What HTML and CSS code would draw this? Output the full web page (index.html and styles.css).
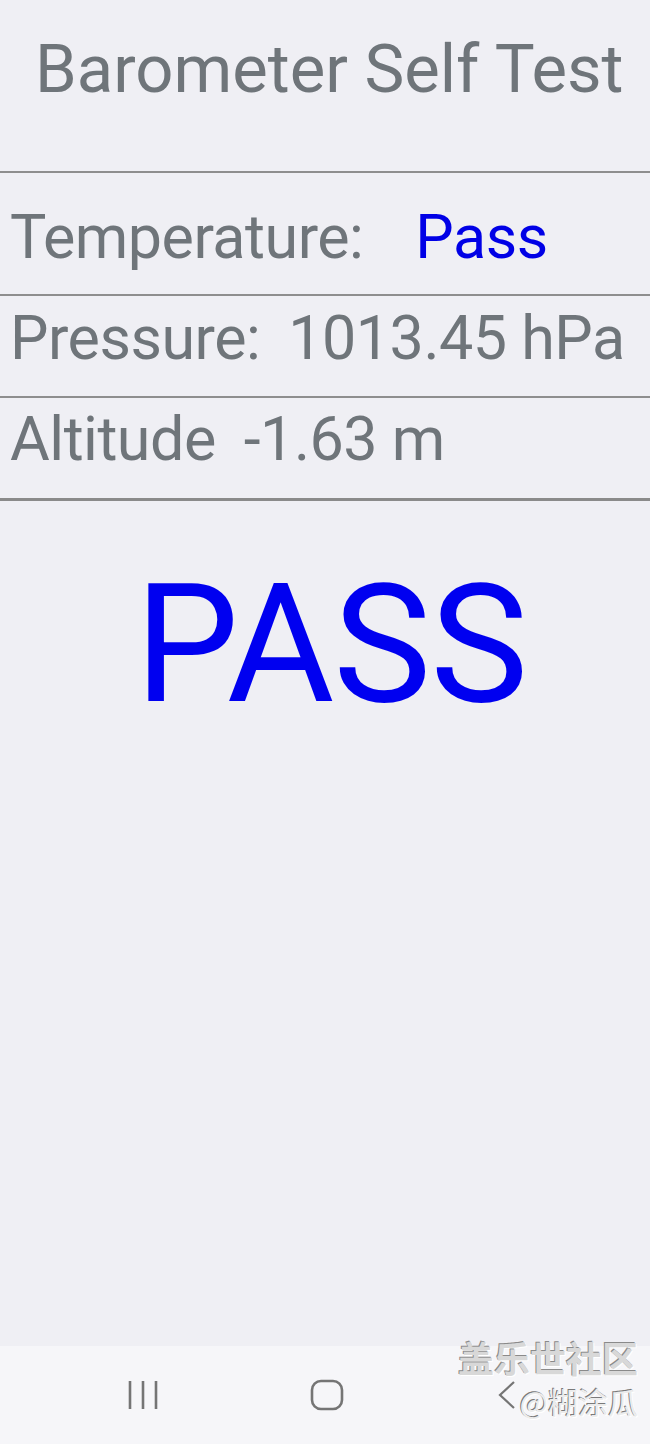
FILE: index.html
```html
<!DOCTYPE html>
<html lang="en">
<head>
    <meta charset="UTF-8">
    <meta name="viewport" content="width=device-width,initial-scale=1.0">
    <title>Barometer Self Test</title>
    <link rel="stylesheet" href="styles.css">
</head>
<body>
<div class="screen">
    <div class="content">
        <div class="title">Barometer Self Test</div>
        <div class="row row-first">
            <span class="label">Temperature:</span>
            <span class="value pass-text temp-value">Pass</span>
        </div>
        <div class="row">
            <span class="label">Pressure:</span>
            <span class="value">1013.45 hPa</span>
        </div>
        <div class="row row-last">
            <span class="label">Altitude</span>
            <span class="value">-1.63 m</span>
        </div>
        <div class="result">PASS</div>
    </div>
    <div class="navbar">
        <svg class="nav-icon" width="34" height="30" viewBox="0 0 34 30">
            <path d="M4 1v28M17 1v28M30 1v28" stroke="#757575" stroke-width="2.6" fill="none"/>
        </svg>
        <svg class="nav-icon" width="34" height="32" viewBox="0 0 34 32">
            <rect x="2" y="2" width="30" height="28" rx="9" stroke="#757575" stroke-width="2.6" fill="none"/>
        </svg>
        <svg class="nav-icon nav-back" width="34" height="30" viewBox="0 0 34 30">
            <path d="M26 2L12 15l14 13" stroke="#757575" stroke-width="2.2" fill="none"/>
        </svg>
        <div class="watermark">
            <div class="wm-big">盖乐世社区</div>
            <div class="wm-small">@糊涂瓜</div>
        </div>
    </div>
</div>
</body>
</html>
```

FILE: styles.css
```css
html, body {
    margin: 0;
    padding: 0;
}

body {
    background: #efeff4;
    font-family: Roboto, "Noto Sans", sans-serif;
    color: #6f757a;
}

.screen {
    width: 650px;
    height: 1444px;
    display: flex;
    flex-direction: column;
    overflow: hidden;
}

.content {
    flex: 1;
}

.title {
    font-size: 67px;
    line-height: 67px;
    padding: 36px 0 68px 35px;
    border-bottom: 2px solid #8e8e8e;
    white-space: nowrap;
}

.row {
    display: flex;
    align-items: baseline;
    font-size: 61px;
    line-height: 61px;
    letter-spacing: -0.5px;
    padding: 12px 0 27px 10px;
    border-bottom: 2px solid #8e8e8e;
    white-space: nowrap;
}

.row-first {
    padding-top: 34px;
    padding-bottom: 26px;
}

.row-last {
    padding-top: 11px;
    padding-bottom: 28px;
    border-bottom: 3px solid #8a8a8a;
}

.value {
    margin-left: 28px;
}

.temp-value {
    margin-left: 52px;
}

.pass-text {
    color: #0000e6;
}

.result {
    font-size: 165px;
    line-height: 165px;
    letter-spacing: -1px;
    color: #0000f0;
    text-align: center;
    padding: 61px 0 0 12px;
}

.navbar {
    position: relative;
    height: 98px;
    background: #f6f6f9;
    display: flex;
    align-items: center;
    gap: 150px;
    padding-left: 126px;
}

.nav-icon {
    display: block;
}

.nav-back {
    margin-left: -6px;
}

.watermark {
    position: absolute;
    right: 12px;
    top: -9px;
    font-family: "Noto Sans CJK SC", sans-serif;
    text-align: right;
    line-height: 1.15;
}

.wm-big {
    font-size: 36px;
    font-weight: bold;
    color: #d8d8d8;
    text-shadow: -1px -1px 0 #8a8a8a, 1px 1px 0 #ffffff;
}

.wm-small {
    margin-top: 6px;
    font-size: 30px;
    color: #ececec;
    text-shadow: -1px -1px 0 #7a7a7a, 1px 1px 0 #ffffff;
}
```
